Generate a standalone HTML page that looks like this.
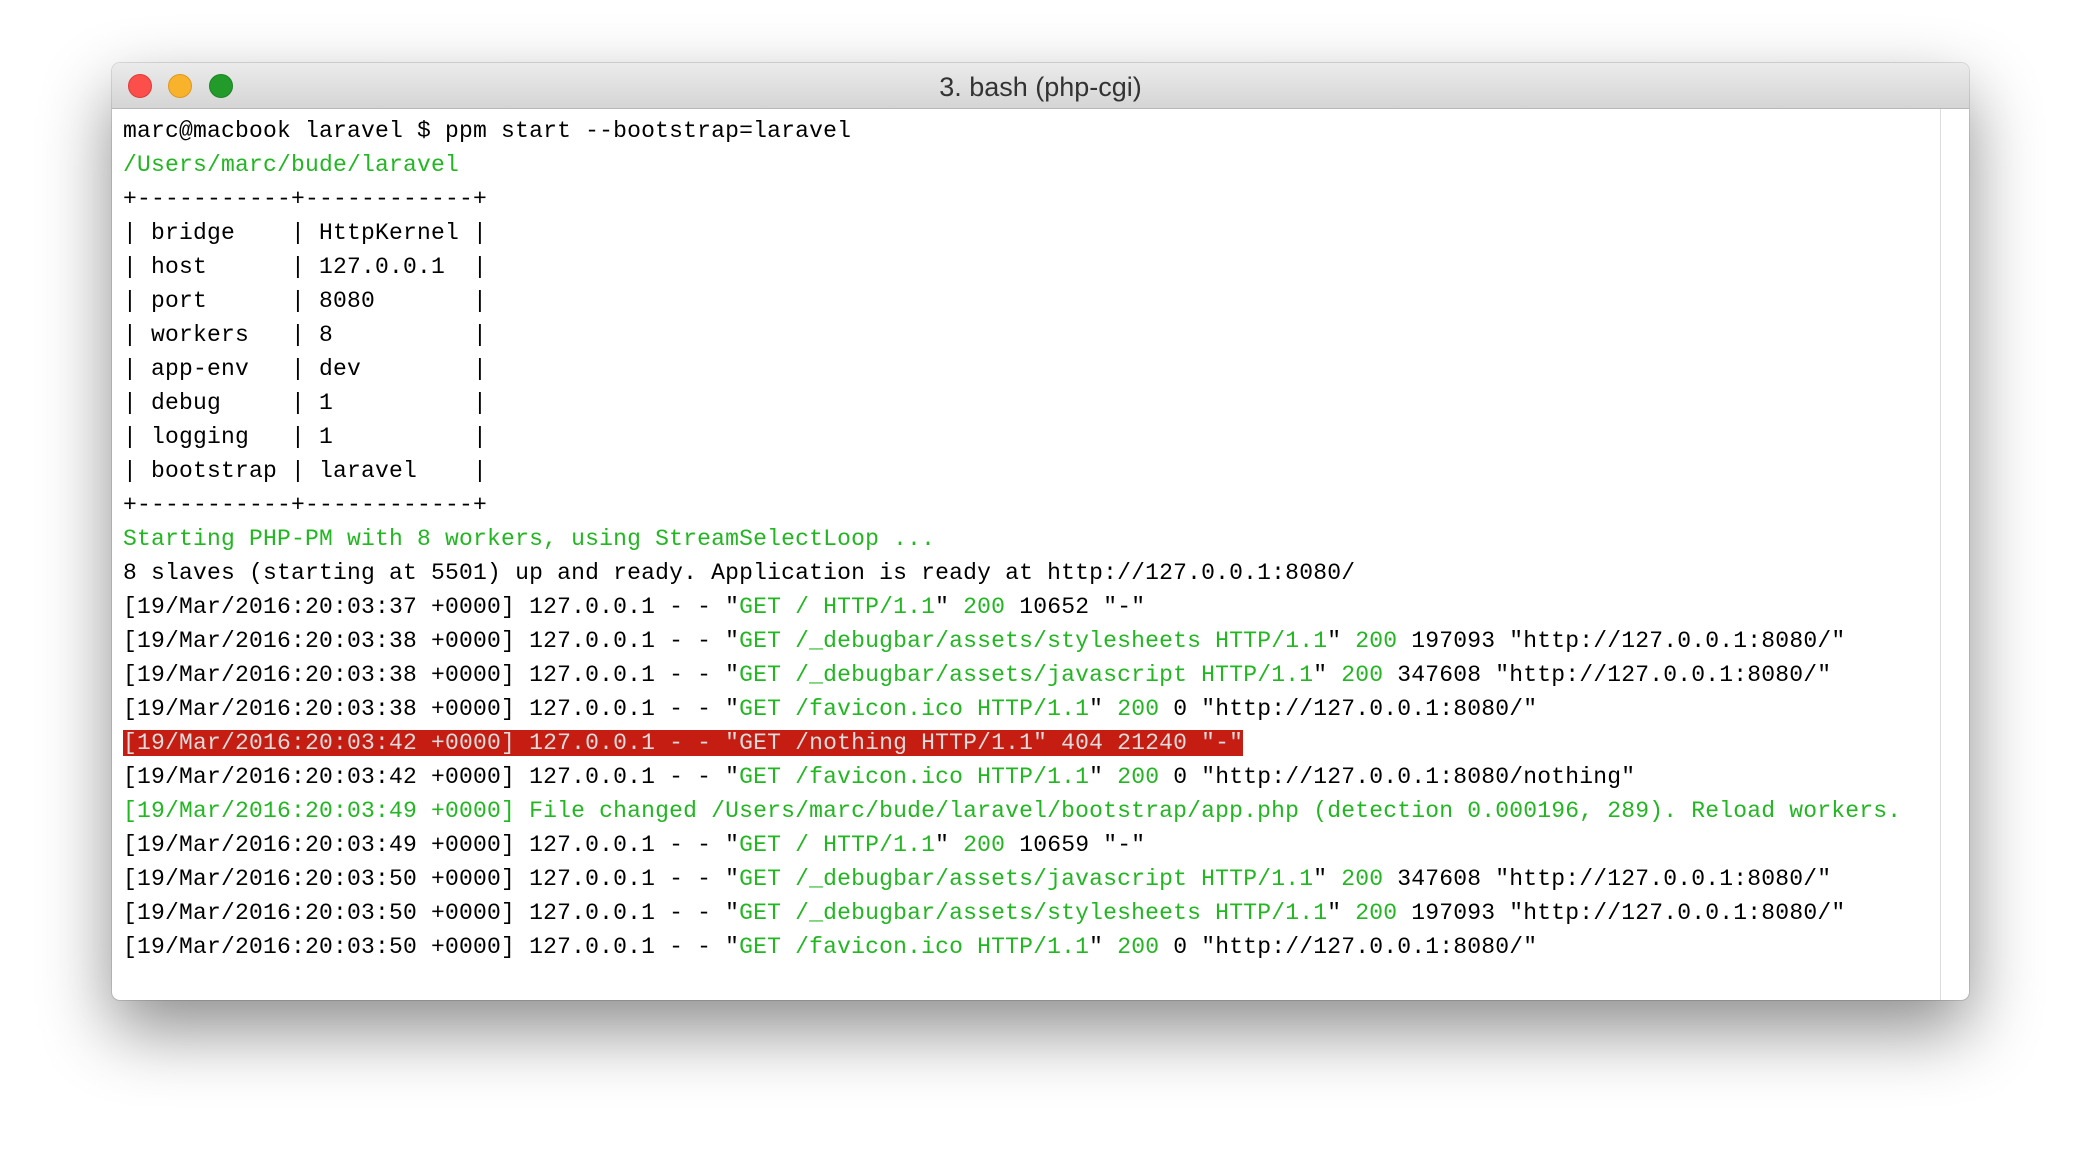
<!DOCTYPE html>
<html><head><meta charset="utf-8"><style>
html,body{margin:0;padding:0;background:#fff;width:2080px;height:1160px;overflow:hidden}
.win{position:absolute;left:112px;top:63px;background:#fff;border-radius:8px;box-shadow:0 30px 70px rgba(0,0,0,.45),0 0 0 1px rgba(0,0,0,.12);overflow:hidden}
.tb{position:absolute;left:0;top:0;right:0;height:45px;background:linear-gradient(#ebebeb,#d5d5d5);border-bottom:1px solid #b8b8b8}
.tl{position:absolute;top:11px;width:22px;height:22px;border-radius:50%}
.title{position:absolute;left:0;right:0;top:0;font:27px "Liberation Sans",sans-serif;line-height:48px;text-align:center;color:#333}
.sb{position:absolute;left:1828px;top:46px;bottom:0;width:1px;background:#ddd}
pre{position:absolute;left:11px;top:51px;margin:0;font:23px/34px "Liberation Mono",monospace;letter-spacing:0.2px;color:#000;white-space:pre}
.g{color:#22b722}
.r{background:#c61d12;color:#ddd}
</style></head><body>
<div class="win" style="width:1857px;height:937px">
<div class="tb">
<div class="tl" style="left:16px;background:#fc4e4b;border:1px solid #de3a36"></div>
<div class="tl" style="left:56px;background:#f8b22c;border:1px solid #dd9820"></div>
<div class="tl" style="left:97px;background:#239b2b;border:1px solid #1b8322"></div>
<div class="title">3. bash (php-cgi)</div>
</div>
<div class="sb"></div>
<pre>marc@macbook laravel $ ppm start --bootstrap=laravel
<span class="g">/Users/marc/bude/laravel</span>
+-----------+------------+
| bridge    | HttpKernel |
| host      | 127.0.0.1  |
| port      | 8080       |
| workers   | 8          |
| app-env   | dev        |
| debug     | 1          |
| logging   | 1          |
| bootstrap | laravel    |
+-----------+------------+
<span class="g">Starting PHP-PM with 8 workers, using StreamSelectLoop ...</span>
8 slaves (starting at 5501) up and ready. Application is ready at http://127.0.0.1:8080/
[19/Mar/2016:20:03:37 +0000] 127.0.0.1 - - "<span class="g">GET / HTTP/1.1</span>" <span class="g">200</span> 10652 "-"
[19/Mar/2016:20:03:38 +0000] 127.0.0.1 - - "<span class="g">GET /_debugbar/assets/stylesheets HTTP/1.1</span>" <span class="g">200</span> 197093 "http://127.0.0.1:8080/"
[19/Mar/2016:20:03:38 +0000] 127.0.0.1 - - "<span class="g">GET /_debugbar/assets/javascript HTTP/1.1</span>" <span class="g">200</span> 347608 "http://127.0.0.1:8080/"
[19/Mar/2016:20:03:38 +0000] 127.0.0.1 - - "<span class="g">GET /favicon.ico HTTP/1.1</span>" <span class="g">200</span> 0 "http://127.0.0.1:8080/"
<span class="r">[19/Mar/2016:20:03:42 +0000] 127.0.0.1 - - "GET /nothing HTTP/1.1" 404 21240 "-"</span>
[19/Mar/2016:20:03:42 +0000] 127.0.0.1 - - "<span class="g">GET /favicon.ico HTTP/1.1</span>" <span class="g">200</span> 0 "http://127.0.0.1:8080/nothing"
<span class="g">[19/Mar/2016:20:03:49 +0000] File changed /Users/marc/bude/laravel/bootstrap/app.php (detection 0.000196, 289). Reload workers.</span>
[19/Mar/2016:20:03:49 +0000] 127.0.0.1 - - "<span class="g">GET / HTTP/1.1</span>" <span class="g">200</span> 10659 "-"
[19/Mar/2016:20:03:50 +0000] 127.0.0.1 - - "<span class="g">GET /_debugbar/assets/javascript HTTP/1.1</span>" <span class="g">200</span> 347608 "http://127.0.0.1:8080/"
[19/Mar/2016:20:03:50 +0000] 127.0.0.1 - - "<span class="g">GET /_debugbar/assets/stylesheets HTTP/1.1</span>" <span class="g">200</span> 197093 "http://127.0.0.1:8080/"
[19/Mar/2016:20:03:50 +0000] 127.0.0.1 - - "<span class="g">GET /favicon.ico HTTP/1.1</span>" <span class="g">200</span> 0 "http://127.0.0.1:8080/"</pre>
</div>
</body></html>
